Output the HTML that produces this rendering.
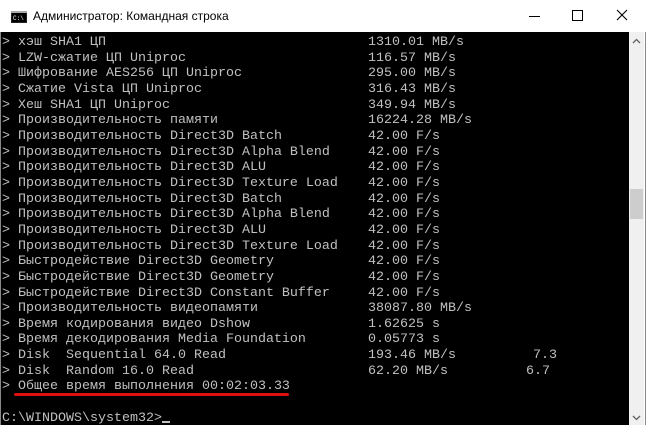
<!DOCTYPE html><html><head><meta charset="utf-8"><style>
body{margin:0;width:646px;height:425px;overflow:hidden;background:#fff;position:relative;font-family:"Liberation Sans",sans-serif}
#win{position:absolute;left:0;top:0;height:425px;border-left:1px solid #888;border-right:1px solid #888;border-top:1px solid #888;box-sizing:border-box;width:646px}
#title{position:absolute;left:0;top:0;width:646px;height:32px;background:#fff}
#title .t{position:absolute;left:33px;top:9px;font-size:12px;color:#000}
#con{position:absolute;left:1px;top:32px;width:628px;height:393px;background:#000}
#txt{position:absolute;left:2px;top:35px;font-family:"Liberation Mono","DejaVu Sans Mono",monospace;font-size:13.33px;line-height:15.67px;color:#c0c0c0}
.l{position:relative;height:15.67px;white-space:pre}
.v{position:absolute;left:366px}
#sb{position:absolute;left:629px;top:32px;width:15px;height:393px;background:#f0f0f0}
</style></head><body>
<div id="win"></div>
<div id="title">
<svg style="position:absolute;left:11px;top:11px" width="16" height="12"><rect x="0" y="0" width="16" height="12" fill="#222"/><rect x="1" y="2" width="14" height="9" fill="#000"/><rect x="0" y="0" width="16" height="2" fill="#aaa"/><text x="2" y="9" font-size="6" fill="#fff" font-family="Liberation Mono">C:\</text></svg>
<span class="t">Администратор: Командная строка</span>
<div style="position:absolute;left:529px;top:16px;width:11px;height:1px;background:#000"></div>
<div style="position:absolute;left:572px;top:10px;width:9px;height:9px;border:1px solid #000"></div>
<svg style="position:absolute;left:616px;top:9px" width="12" height="12"><path d="M1 1L11 11M11 1L1 11" stroke="#000" stroke-width="1.1"/></svg>
</div>
<div id="con"></div>
<div id="sb">
<svg style="position:absolute;left:3px;top:6px" width="9" height="6"><path d="M1 5L4.5 1.5L8 5" stroke="#606060" fill="none" stroke-width="1.3"/></svg>
<div style="position:absolute;left:1px;top:157px;width:13px;height:30px;background:#cdcdcd"></div>
<svg style="position:absolute;left:3px;top:383px" width="9" height="6"><path d="M1 1L4.5 4.5L8 1" stroke="#606060" fill="none" stroke-width="1.3"/></svg>
</div>
<div id="txt"><div class="l">&gt; хэш SHA1 ЦП<span class="v">1310.01 MB/s</span></div><div class="l">&gt; LZW-сжатие ЦП Uniproc<span class="v">116.57 MB/s</span></div><div class="l">&gt; Шифрование AES256 ЦП Uniproc<span class="v">295.00 MB/s</span></div><div class="l">&gt; Сжатие Vista ЦП Uniproc<span class="v">316.43 MB/s</span></div><div class="l">&gt; Хеш SHA1 ЦП Uniproc<span class="v">349.94 MB/s</span></div><div class="l">&gt; Производительность памяти<span class="v">16224.28 MB/s</span></div><div class="l">&gt; Производительность Direct3D Batch<span class="v">42.00 F/s</span></div><div class="l">&gt; Производительность Direct3D Alpha Blend<span class="v">42.00 F/s</span></div><div class="l">&gt; Производительность Direct3D ALU<span class="v">42.00 F/s</span></div><div class="l">&gt; Производительность Direct3D Texture Load<span class="v">42.00 F/s</span></div><div class="l">&gt; Производительность Direct3D Batch<span class="v">42.00 F/s</span></div><div class="l">&gt; Производительность Direct3D Alpha Blend<span class="v">42.00 F/s</span></div><div class="l">&gt; Производительность Direct3D ALU<span class="v">42.00 F/s</span></div><div class="l">&gt; Производительность Direct3D Texture Load<span class="v">42.00 F/s</span></div><div class="l">&gt; Быстродействие Direct3D Geometry<span class="v">42.00 F/s</span></div><div class="l">&gt; Быстродействие Direct3D Geometry<span class="v">42.00 F/s</span></div><div class="l">&gt; Быстродействие Direct3D Constant Buffer<span class="v">42.00 F/s</span></div><div class="l">&gt; Производительность видеопамяти<span class="v">38087.80 MB/s</span></div><div class="l">&gt; Время кодирования видео Dshow<span class="v">1.62625 s</span></div><div class="l">&gt; Время декодирования Media Foundation<span class="v">0.05773 s</span></div><div class="l">&gt; Disk  Sequential 64.0 Read<span class="v">193.46 MB/s</span><span style="position:absolute;left:531px">7.3</span></div><div class="l">&gt; Disk  Random 16.0 Read<span class="v">62.20 MB/s</span><span style="position:absolute;left:524px">6.7</span></div><div class="l">&gt; Общее время выполнения 00:02:03.33</div><div class="l"></div><div class="l">C:\WINDOWS\system32&gt;<span style="display:inline-block;width:8px;height:2px;background:#c0c0c0;vertical-align:-2px"></span></div></div>
<div style="position:absolute;left:14px;top:393px;width:275px;height:3px;background:#e01010;border-radius:2px"></div>
</body></html>
